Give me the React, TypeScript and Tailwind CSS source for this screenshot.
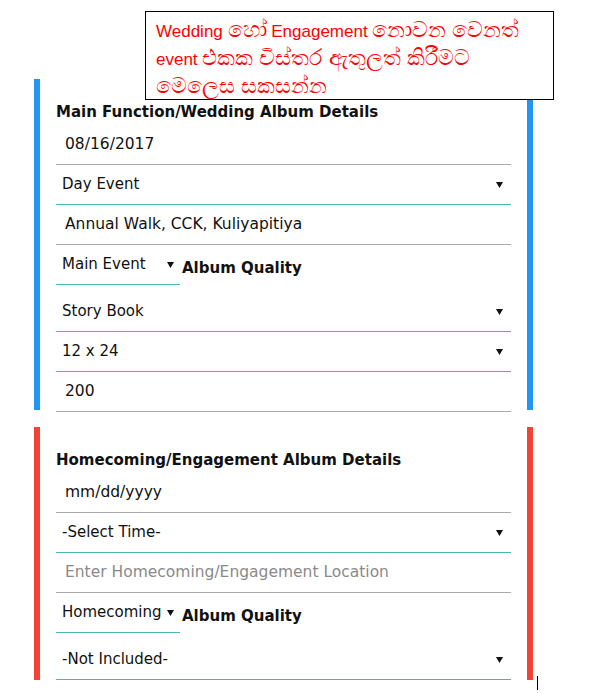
import React from 'react';

const font = { fontFamily: '"DejaVu Sans", Verdana, sans-serif' };

function Arrow() {
  return (
    <svg width="7" height="6" viewBox="0 0 7 6" className="shrink-0">
      <path d="M0 0 L7 0 L3.5 6 Z" fill="#111" />
    </svg>
  );
}

function Si({ children }: { children: React.ReactNode }) {
  return <span className="text-[22px] leading-[26px]">{children}</span>;
}

function InputRow({ value, placeholder, gray }: { value?: string; placeholder?: string; gray?: boolean }) {
  return (
    <div className="h-[40px] flex items-center pl-[9px] border-b-[1.5px] border-[#aaaaaa]">
      <span className={`text-[15.5px] ${gray ? 'text-[#8a8a8a]' : 'text-[#111]'}`}>{value ?? placeholder}</span>
    </div>
  );
}

function SelectRow({ value, top }: { value: string; top?: boolean }) {
  return (
    <div className={`h-[40px] flex items-center justify-between pl-[6px] pr-[8px] border-b border-[#4db6ac] ${top ? 'mt-[7px]' : ''}`}>
      <span className="text-[15px] text-[#111]">{value}</span>
      <Arrow />
    </div>
  );
}

function QualityRow({ value }: { value: string }) {
  return (
    <div className="h-[40px] flex items-center">
      <div className="w-[124px] h-[40px] flex items-center justify-between pl-[6px] pr-[6px] border-b border-[#4db6ac]">
        <span className="text-[15px] text-[#111]">{value}</span>
        <Arrow />
      </div>
      <span className="ml-[2px] mt-[6px] text-[15px] font-bold text-[#111]">Album Quality</span>
    </div>
  );
}

export default function App() {
  return (
    <div className="relative w-[600px] h-[693px] bg-white overflow-hidden" style={font}>
      {/* note box */}
      <div
        className="absolute left-[145px] top-[11px] w-[409px] h-[89px] border border-black bg-white z-10 pl-[10px] pt-[5px] text-[#ff0000] text-[17px] leading-[26px]"
        style={{ fontFamily: '"Liberation Sans", Arial, sans-serif' }}
      >
        Wedding <Si>හෝ</Si> Engagement <Si>නොවන වෙනත්</Si>
        <br />
        event <Si>එකක විස්තර ඇතුලත් කිරීමට</Si>
        <br />
        <Si>මෙලෙස සකසන්න</Si>
      </div>

      <div className="pl-[34px] pt-[79px] w-[533px]">
        {/* main function */}
        <div className="border-x-[6px] border-[#2196f3] px-[16px] pt-[23px] h-[331px]">
          <div className="text-[15px] font-bold text-[#111] leading-[20px] mb-[3px]">Main Function/Wedding Album Details</div>
          <InputRow value="08/16/2017" />
          <SelectRow value="Day Event" />
          <InputRow value="Annual Walk, CCK, Kuliyapitiya" />
          <QualityRow value="Main Event" />
          <SelectRow value="Story Book" top />
          <SelectRow value="12 x 24" />
          <InputRow value="200" />
        </div>

        {/* homecoming */}
        <div className="mt-[17px] border-x-[6px] border-[#f44336] px-[16px] pt-[23px] h-[253px]">
          <div className="text-[15px] font-bold text-[#111] leading-[20px] mb-[3px]">Homecoming/Engagement Album Details</div>
          <InputRow value="mm/dd/yyyy" />
          <SelectRow value="-Select Time-" />
          <InputRow placeholder="Enter Homecoming/Engagement Location" gray />
          <QualityRow value="Homecoming" />
          <SelectRow value="-Not Included-" top />
        </div>
      </div>

      {/* text cursor */}
      <div className="absolute left-[537px] top-[676px] w-px h-[14px] bg-black" />
    </div>
  );
}
